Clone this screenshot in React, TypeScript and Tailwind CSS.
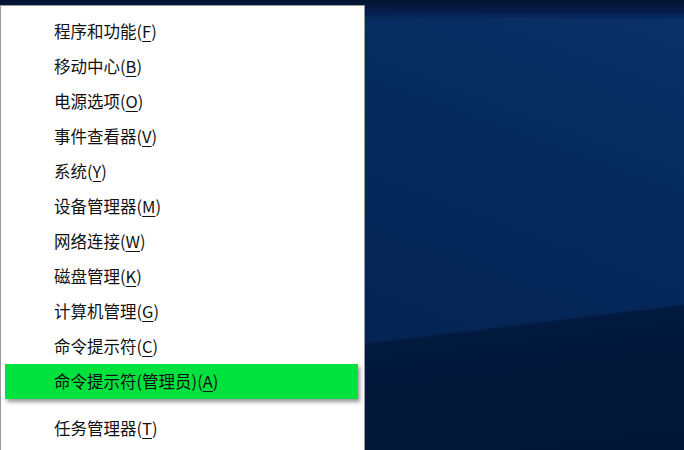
const items: { label: string; key: string; active?: boolean; gapBefore?: boolean }[] = [
  { label: "程序和功能", key: "F" },
  { label: "移动中心", key: "B" },
  { label: "电源选项", key: "O" },
  { label: "事件查看器", key: "V" },
  { label: "系统", key: "Y" },
  { label: "设备管理器", key: "M" },
  { label: "网络连接", key: "W" },
  { label: "磁盘管理", key: "K" },
  { label: "计算机管理", key: "G" },
  { label: "命令提示符", key: "C" },
  { label: "命令提示符(管理员)", key: "A", active: true },
  { label: "任务管理器", key: "T", gapBefore: true },
];

const MenuRow = ({ label, keyChar, active }: { label: string; keyChar: string; active?: boolean }) => {
  return (
    <div
      className={`ml-[4px] mr-[6px] flex h-[35px] items-center pl-[49px] text-[16.5px] text-[#111] ${
        active ? "bg-[#00e33f] shadow-[2px_3px_4px_rgba(0,0,0,0.4)]" : ""
      }`}
    >
      <span>
        {label}(<span className="underline decoration-1 underline-offset-[3px]">{keyChar}</span>)
      </span>
    </div>
  );
};

export default function App() {
  return (
    <div
      className="flex h-[450px] w-[684px] overflow-hidden pt-[5px]"
      style={{
        fontFamily: '"Noto Sans CJK SC", "Noto Sans", sans-serif',
        background:
          "linear-gradient(180deg, #031330 0px, #052050 14px, rgba(0,0,0,0) 20px), linear-gradient(173deg, rgba(0,0,0,0) 72.6%, #021a3d 73%, #021735 100%), linear-gradient(200deg, #093269 0%, #062a5d 30%, #042352 70%)",
      }}
    >
      <div className="h-[460px] w-[365px] shrink-0 border-x border-t border-[#9a9a9a] bg-white pt-[8px]">
        {items.map(item => (
          <div key={item.label}>
            {item.gapBefore && <div className="h-[12px]" />}
            <MenuRow label={item.label} keyChar={item.key} active={item.active} />
          </div>
        ))}
      </div>
      <div className="flex-1" />
    </div>
  );
}
